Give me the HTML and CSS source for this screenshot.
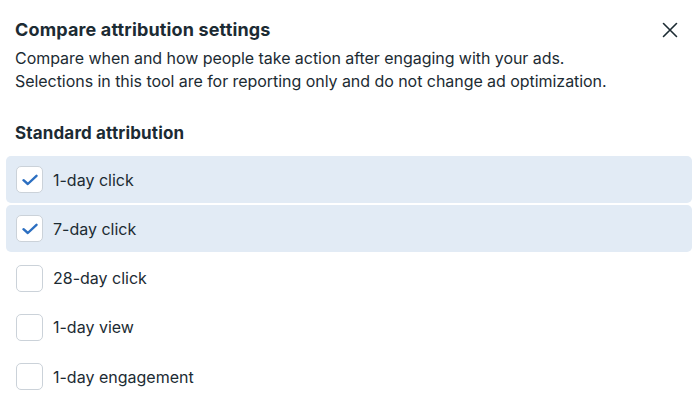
FILE: index.html
```html
<!DOCTYPE html>
<html lang="en">
<head>
<meta charset="utf-8">
<title>Compare attribution settings</title>
<link rel="stylesheet" href="styles.css">
</head>
<body>
<section class="dialog">
  <header class="dialog-header">
    <h1 class="dialog-title">Compare attribution settings</h1>
    <button class="close-btn" type="button" aria-label="Close">
      <svg width="24" height="24" viewBox="0 0 24 24" aria-hidden="true">
        <path d="M5.5 5.5 L18.5 18.5 M18.5 5.5 L5.5 18.5" stroke="#1c2b33" stroke-width="1.6" stroke-linecap="round" fill="none"/>
      </svg>
    </button>
  </header>
  <p class="dialog-desc">Compare when and how people take action after engaging with your ads.<br>Selections in this tool are for reporting only and do not change ad optimization.</p>

  <h2 class="section-title">Standard attribution</h2>

  <ul class="option-list">
    <li class="option is-checked">
      <span class="checkbox">
        <svg width="16" height="12" viewBox="0 0 16 12" aria-hidden="true"><path d="M1.5 6.2 L5.8 10 L14.5 1.8" stroke="#2c6fc1" stroke-width="2.4" stroke-linecap="round" stroke-linejoin="round" fill="none"/></svg>
      </span>
      <span class="option-label">1-day click</span>
    </li>
    <li class="option is-checked">
      <span class="checkbox">
        <svg width="16" height="12" viewBox="0 0 16 12" aria-hidden="true"><path d="M1.5 6.2 L5.8 10 L14.5 1.8" stroke="#2c6fc1" stroke-width="2.4" stroke-linecap="round" stroke-linejoin="round" fill="none"/></svg>
      </span>
      <span class="option-label">7-day click</span>
    </li>
    <li class="option">
      <span class="checkbox"></span>
      <span class="option-label">28-day click</span>
    </li>
    <li class="option">
      <span class="checkbox"></span>
      <span class="option-label">1-day view</span>
    </li>
    <li class="option">
      <span class="checkbox"></span>
      <span class="option-label">1-day engagement</span>
    </li>
  </ul>
</section>
</body>
</html>
```

FILE: styles.css
```css
* {
  box-sizing: border-box;
}

html, body {
  margin: 0;
  padding: 0;
  background: #ffffff;
}

body {
  font-family: Inter, "Noto Sans", "Liberation Sans", sans-serif;
  color: #1c2b33;
  width: 700px;
  height: 407px;
  overflow: hidden;
}

.dialog {
  padding-top: 18px;
}

.dialog-header {
  display: flex;
  align-items: center;
  justify-content: space-between;
  padding: 0 18px 0 15px;
}

.dialog-title {
  margin: 0;
  font-size: 18px;
  line-height: 24px;
  font-weight: 700;
  letter-spacing: 0.15px;
}

.close-btn {
  width: 24px;
  height: 24px;
  padding: 0;
  border: 0;
  background: none;
  display: flex;
  align-items: center;
  justify-content: center;
}

.dialog-desc {
  margin: 5px 0 0;
  padding: 0 15px;
  font-size: 16px;
  line-height: 23px;
  font-weight: 400;
  letter-spacing: -0.05px;
}

.section-title {
  margin: 28px 0 0;
  padding: 0 15px;
  font-size: 17px;
  line-height: 24px;
  font-weight: 700;
  letter-spacing: 0.15px;
}

.option-list {
  list-style: none;
  margin: 11px 8px 0 6px;
  padding: 0;
  display: flex;
  flex-direction: column;
  gap: 2.25px;
}

.option {
  display: flex;
  align-items: center;
  gap: 10px;
  height: 47px;
  padding-left: 10px;
  border-radius: 5px;
}

.option.is-checked {
  background: #e2ebf5;
}

.checkbox {
  width: 27px;
  height: 27px;
  flex: 0 0 27px;
  border: 1px solid #cbd2d9;
  border-radius: 5px;
  background: #ffffff;
  display: flex;
  align-items: center;
  justify-content: center;
}

.option-label {
  font-size: 16px;
  line-height: 24px;
}
```
